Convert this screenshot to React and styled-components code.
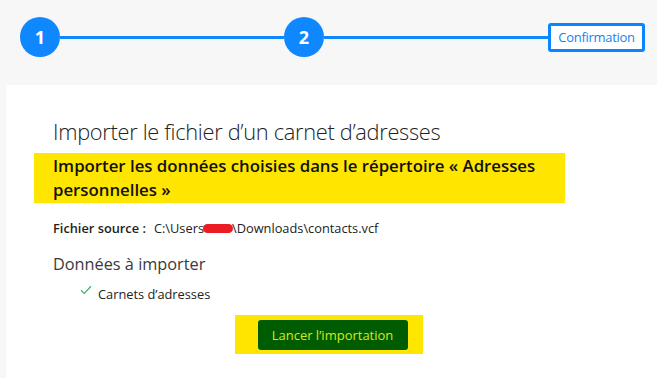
import * as React from "react";
import styled, { createGlobalStyle } from "styled-components";

const GlobalStyle = createGlobalStyle`
  html, body {
    margin: 0;
    padding: 0;
    background: #f7f7f7;
    font-family: "Open Sans", "Noto Sans", sans-serif;
  }
`;

function App() {
  return (
    <Page>
      <GlobalStyle />
      <Stepper>
        <StepCircle>1</StepCircle>
        <StepLine />
        <StepCircle>2</StepCircle>
        <StepLine />
        <StepLabel>Confirmation</StepLabel>
      </Stepper>
      <Panel>
        <Title>Importer le fichier d’un carnet d’adresses</Title>
        <Highlight>
          <Subtitle>
            Importer les données choisies dans le répertoire « Adresses
            personnelles »
          </Subtitle>
        </Highlight>
        <SourceRow>
          <SourceLabel>Fichier source :</SourceLabel>
          <SourcePath>
            C:\Users<Redacted />\Downloads\contacts.vcf
          </SourcePath>
        </SourceRow>
        <SectionTitle>Données à importer</SectionTitle>
        <CheckItem>
          <CheckMark viewBox="0 0 12 10">
            <path d="M1 5.2 L4.3 8.4 L11 1.2" fill="none" stroke="#3cb66e" strokeWidth="1.3" />
          </CheckMark>
          Carnets d’adresses
        </CheckItem>
        <ButtonRow>
          <ButtonHighlight>
            <ImportButton>Lancer l’importation</ImportButton>
          </ButtonHighlight>
        </ButtonRow>
      </Panel>
    </Page>
  );
}

const Page = styled.div`
  width: 657px;
  height: 378px;
  overflow: hidden;
  display: flex;
  flex-direction: column;
  background: #f7f7f7;
`;

const Stepper = styled.div`
  display: flex;
  align-items: center;
  height: 85px;
  padding: 0 12px 11px 20px;
  box-sizing: border-box;
`;

const StepCircle = styled.div`
  width: 40px;
  height: 40px;
  border-radius: 50%;
  background: #0f87ff;
  color: #fff;
  display: flex;
  align-items: center;
  justify-content: center;
  font: 700 18px "Open Sans", sans-serif;
  flex-shrink: 0;
`;

const StepLine = styled.div`
  flex: 1;
  height: 3px;
  background: #0f87ff;
`;

const StepLabel = styled.div`
  width: 97px;
  height: 29px;
  box-sizing: border-box;
  border: 3px solid #0a84ff;
  border-radius: 3px;
  background: #fff;
  color: #1a7ff0;
  display: flex;
  align-items: center;
  justify-content: center;
  font: 400 13px "Open Sans", sans-serif;
  letter-spacing: -0.3px;
`;

const Panel = styled.div`
  flex: 1;
  margin-left: 6px;
  background: #fff;
  padding: 31px 0 0 47px;
  display: flex;
  flex-direction: column;
`;

const Title = styled.div`
  font: 300 21.8px "Open Sans", sans-serif;
  color: #222;
  line-height: 32px;
  letter-spacing: -0.3px;
`;

const Highlight = styled.div`
  margin: 5px 0 0 -19px;
  width: 531px;
  background: #ffe600;
  padding: 0 0 0 19px;
  box-sizing: border-box;
`;

const Subtitle = styled.div`
  font: 600 16.8px "Open Sans", sans-serif;
  color: #111;
  line-height: 24px;
  padding: 1px 0;
  width: 495px;
`;

const SourceRow = styled.div`
  display: flex;
  align-items: center;
  gap: 8px;
  margin-top: 15px;
  font-size: 12.8px;
  color: #222;
  line-height: 20px;
`;

const SourceLabel = styled.span`
  font-weight: 600;
`;

const SourcePath = styled.span`
  display: flex;
  align-items: center;
`;

const Redacted = styled.span`
  display: inline-block;
  width: 30px;
  height: 9px;
  border-radius: 5px;
  background: #ec1c24;
  margin: 0 -1px;
`;

const SectionTitle = styled.div`
  font: 400 16.3px "Open Sans", sans-serif;
  color: #3a3a3a;
  margin-top: 13px;
  line-height: 26px;
`;

const CheckItem = styled.div`
  display: flex;
  align-items: center;
  margin: 8px 0 0 27px;
  font-size: 12.8px;
  color: #222;
  gap: 6px;
`;

const CheckMark = styled.svg`
  width: 12px;
  height: 10px;
  margin-top: -8px;
`;

const ButtonRow = styled.div`
  display: flex;
  justify-content: center;
  margin: 12px 0 0 -53px;
`;

const ButtonHighlight = styled.div`
  background: #ffe600;
  padding: 5px 15px 4px 23px;
`;

const ImportButton = styled.div`
  width: 150px;
  height: 30px;
  border-radius: 3px;
  background: #005c00;
  color: #d4ea1c;
  display: flex;
  align-items: center;
  justify-content: center;
  font: 400 13px "Open Sans", sans-serif;
`;

export default App;
